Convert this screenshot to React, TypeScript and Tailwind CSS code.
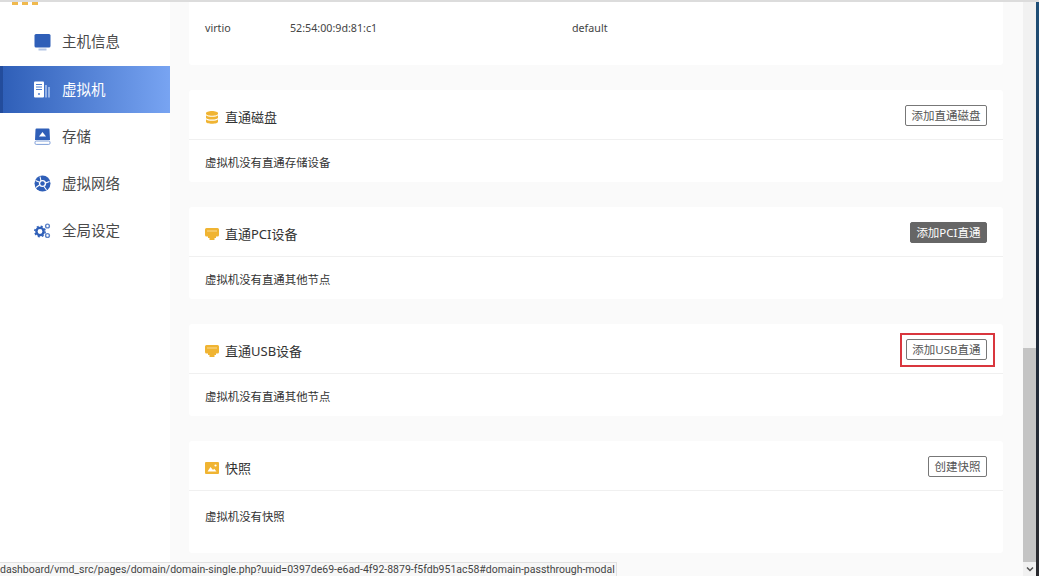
import React from "react";

const FONT = "font-['Noto_Sans','Noto_Sans_CJK_SC',sans-serif]";

function MonitorIcon() {
  return (
    <svg width="17" height="17" viewBox="0 0 17 17">
      <rect x="0.5" y="0" width="16" height="13.500" rx="1.500" fill="#2f5fb8" />
      <rect x="4.500" y="14.500" width="8" height="2" fill="#b4c6e6" />
    </svg>
  );
}

function ServerIcon() {
  return (
    <svg width="17" height="17" viewBox="0 0 17 17">
      <rect x="0" y="0.500" width="10" height="16" rx="1" fill="#fff" />
      <path d="M2 3.500h6M2 6h6M2 8.500h6" stroke="#4f7fd0" strokeWidth="1" />
      <circle cx="5" cy="13" r="1" fill="#4f7fd0" />
      <path d="M12 4v12.500M15 6v10.500" stroke="#a9c2ee" strokeWidth="1.600" />
    </svg>
  );
}

function StorageIcon() {
  return (
    <svg width="17" height="17" viewBox="0 0 17 17">
      <path d="M2.500 0.500h12a1 1 0 0 1 1 1L16 12H1L1.500 1.500a1 1 0 0 1 1-1z" fill="#2f5fb8" />
      <path d="M8.500 4L12 8.500H5z" fill="#fff" />
      <rect x="1" y="13" width="15" height="3.400" rx="1.200" fill="#fff" stroke="#7f9fd8" strokeWidth="1" />
    </svg>
  );
}

function NetworkIcon() {
  return (
    <svg width="17" height="17" viewBox="0 0 17 17">
      <circle cx="8.500" cy="8.500" r="8" fill="#2f5fb8" />
      <circle cx="8.500" cy="8.500" r="3.600" fill="#fff" />
      <path d="M6 1.500L7 6M15.500 6.500L11.500 8M12.500 15L10 11.500M2 12.500L5.500 10M1.500 5.500L5 7" stroke="#fff" strokeWidth="1.100" />
      <circle cx="8.500" cy="8.500" r="2.200" fill="#2f5fb8" />
    </svg>
  );
}

function GearsIcon() {
  return (
    <svg width="17" height="17" viewBox="0 0 17 17">
      <circle cx="6" cy="9.500" r="3.600" fill="none" stroke="#2f5fb8" strokeWidth="2.400" />
      <circle cx="6" cy="9.500" r="5.200" fill="none" stroke="#2f5fb8" strokeWidth="1.500" strokeDasharray="2 2.100" />
      <circle cx="13.500" cy="4" r="1.900" fill="none" stroke="#5b82c8" strokeWidth="1.400" />
      <circle cx="13.500" cy="13.500" r="1.900" fill="none" stroke="#5b82c8" strokeWidth="1.400" />
    </svg>
  );
}

function DiskIcon() {
  return (
    <svg width="14" height="13" viewBox="0 0 14 13">
      <path d="M1 2.200C1 1 3.700 0 7 0s6 1 6 2.200v.6C13 4 10.300 4.800 7 4.800S1 4 1 2.800z" fill="#f0b432" />
      <path d="M1 4.300C2 5.300 4.300 5.800 7 5.800s5-.5 6-1.500v2.400c0 1-2.700 1.800-6 1.800s-6-.8-6-1.800z" fill="#f0b432" />
      <path d="M1 8.200c1 1 3.300 1.500 6 1.500s5-.5 6-1.500v2.600c0 1.200-2.700 2-6 2s-6-.8-6-2z" fill="#f0b432" />
    </svg>
  );
}

function PortIcon() {
  return (
    <svg width="14" height="12" viewBox="0 0 14 12">
      <path d="M1.500 0h11A1.500 1.500 0 0 1 14 1.500V7a1.500 1.500 0 0 1-1.500 1.500H11v1.500H9.500v2h-5v-2H3V8.500H1.500A1.500 1.500 0 0 1 0 7V1.500A1.500 1.500 0 0 1 1.500 0z" fill="#f0b432" />
      <path d="M2.500 3h9" stroke="#fbe6b4" strokeWidth="1.400" strokeDasharray="1 1" />
    </svg>
  );
}

function PictureIcon() {
  return (
    <svg width="14" height="12" viewBox="0 0 14 12">
      <rect x="0" y="0" width="14" height="12" rx="1" fill="#f0b432" />
      <path d="M2.500 9.500L5.500 5l2.500 3 1.200-1.200L11.500 9.500z" fill="#fff" />
      <circle cx="10.500" cy="3.500" r="1.100" fill="#fff" />
    </svg>
  );
}

const navItems = [
  { label: "主机信息", icon: <MonitorIcon /> },
  { label: "虚拟机", icon: <ServerIcon />, active: true },
  { label: "存储", icon: <StorageIcon /> },
  { label: "虚拟网络", icon: <NetworkIcon /> },
  { label: "全局设定", icon: <GearsIcon /> },
];

function Sidebar() {
  return (
    <aside className="w-[170px] shrink-0 bg-white">
      <div className="h-[16px] flex items-start gap-[4px] pl-[12px]">
        <span className="w-[6px] h-[3px] bg-[#f0b94e]" />
        <span className="w-[6px] h-[3px] bg-[#f0b94e]" />
        <span className="w-[6px] h-[3px] bg-[#f0b94e]" />
      </div>
      {navItems.map((item, i) =>
        item.active ? (
          <div
            key={item.label}
            className="h-[47px] flex items-center gap-[11px] pl-[31px] text-white border-l-[3px] border-[#234c9c] bg-gradient-to-r from-[#2f5fb8] to-[#78a4f2]"
          >
            {item.icon}
            <span className="text-[14.500px]">{item.label}</span>
          </div>
        ) : (
          <div
            key={item.label}
            className={
              i === 0
                ? "h-[48px] flex items-center gap-[11px] pl-[34px] text-[#4a4a4a]"
                : "h-[47px] flex items-center gap-[11px] pl-[34px] text-[#4a4a4a]"
            }
          >
            {item.icon}
            <span className="text-[14.500px]">{item.label}</span>
          </div>
        )
      )}
    </aside>
  );
}

function Section({
  icon,
  title,
  action,
  dark,
  note,
  bodyClass,
}: {
  icon: React.ReactNode;
  title: string;
  action: string;
  dark?: boolean;
  note: string;
  bodyClass: string;
}) {
  return (
    <section className="bg-white rounded-[3px]">
      <div className="h-[50px] flex items-center justify-between pt-[2px] px-[16px] border-b border-[#f0f0f0]">
        <div className="flex items-center gap-[6px] text-[13px] text-[#333] pt-[4px]">
          <span className="w-[14px] flex justify-center -mt-[1px]">{icon}</span>
          <span>{title}</span>
        </div>
        <button
          className={
            dark
              ? "h-[21px] px-[5.500px] text-[11.500px] leading-none rounded-[2px] bg-[#666] border border-[#666] text-white"
              : "h-[21px] px-[5.500px] text-[11.500px] leading-none rounded-[2px] bg-white border border-[#777] text-[#555]"
          }
        >
          {action}
        </button>
      </div>
      <div className={`${bodyClass} flex items-center pl-[16px] text-[11.400px] text-[#333]`}>{note}</div>
    </section>
  );
}

export default function App() {
  return (
    <div className={`relative h-[576px] w-full overflow-hidden bg-white flex flex-col ${FONT}`}>
      <div className="h-[2px] shrink-0 bg-[#dcdcdc]" />
      <div className="flex flex-1 min-h-0">
        <Sidebar />
        <main className="flex-1 min-w-0 bg-[#fafafa] pl-[19px] pr-[20px] flex flex-col gap-[25px]">
          <section className="h-[63px] shrink-0 bg-white rounded-b-[3px] flex items-start pt-[18px] pl-[16px] text-[10.700px] text-[#444]">
            <span className="w-[85px]">virtio</span>
            <span className="w-[282px]">52:54:00:9d:81:c1</span>
            <span>default</span>
          </section>
          <Section icon={<DiskIcon />} title="直通磁盘" action="添加直通磁盘" note="虚拟机没有直通存储设备" bodyClass="h-[42px] pt-[4px]" />
          <Section icon={<PortIcon />} title="直通PCI设备" action="添加PCI直通" dark note="虚拟机没有直通其他节点" bodyClass="h-[42px] pt-[4px]" />
          <Section icon={<PortIcon />} title="直通USB设备" action="添加USB直通" note="虚拟机没有直通其他节点" bodyClass="h-[42px] pt-[4px]" />
          <Section icon={<PictureIcon />} title="快照" action="创建快照" note="虚拟机没有快照" bodyClass="h-[62px] pb-[10px]" />
        </main>
        <div className="w-[13px] shrink-0 bg-[#f1f1f1] flex flex-col">
          <div className="h-[346px] shrink-0" />
          <div className="flex-1 bg-[#c4c4c4]" />
          <div className="h-[14px] shrink-0 flex items-center justify-center">
            <svg width="8" height="6" viewBox="0 0 8 6">
              <path d="M1 1.500L4 4.500L7 1.500" fill="none" stroke="#505050" strokeWidth="1.500" />
            </svg>
          </div>
        </div>
        <div className="w-[3px] shrink-0 bg-gradient-to-b from-[#1e4f78] via-[#1c2a3c] to-[#2a2a2e]" />
      </div>

      {/* red annotation round the USB button */}
      <div className="absolute left-[900px] top-[333px] w-[95px] h-[34px] border-2 border-[#d9363e]" />

      {/* browser link status bubble */}
      <div className="absolute left-0 bottom-0 w-[617px] h-[14px] bg-[#f7f7f7] border-t border-r border-[#e2e2e2] overflow-hidden whitespace-nowrap text-[10.500px] leading-[14px] text-[#444] font-['Roboto','Noto_Sans',sans-serif]">
        dashboard/vmd_src/pages/domain/domain-single.php?uuid=0397de69-e6ad-4f92-8879-f5fdb951ac58#domain-passthrough-modal
      </div>
    </div>
  );
}
